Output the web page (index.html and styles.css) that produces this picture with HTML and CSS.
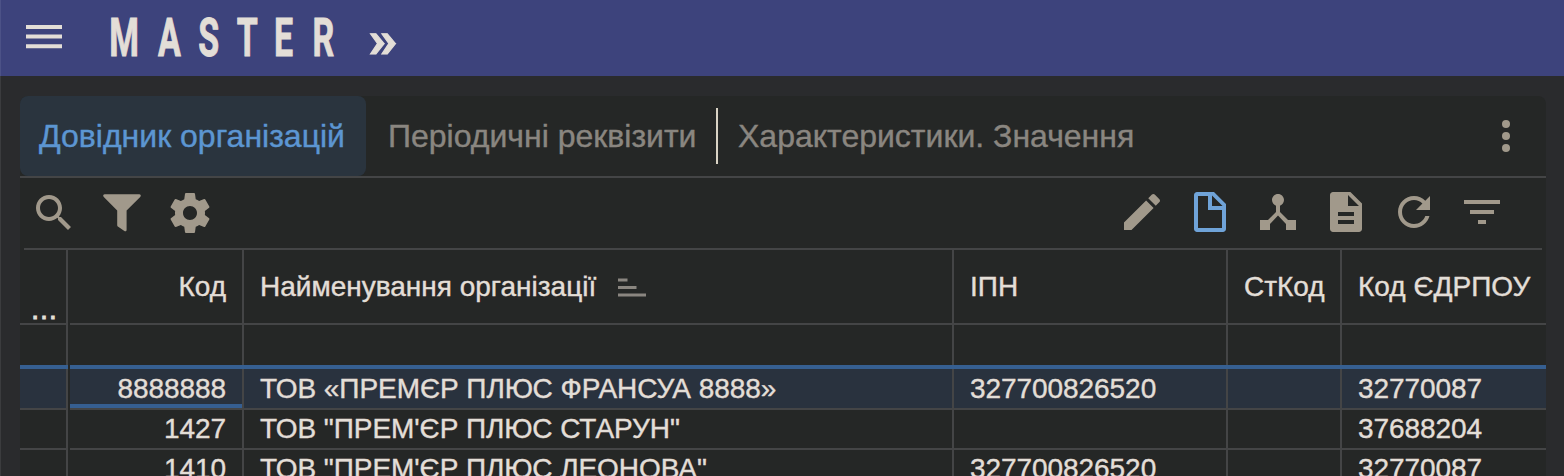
FILE: index.html
```html
<!DOCTYPE html>
<html lang="uk">
<head>
<meta charset="utf-8">
<title>MASTER</title>
<link rel="stylesheet" href="styles.css">
</head>
<body>
<header class="appbar">
  <svg class="menu" width="36" height="26" viewBox="0 0 36 26"><path d="M0 0h36v4H0zM0 9.500h36v4H0zM0 19.200h36v4H0z"/></svg>
  <svg class="brand" width="300" height="76" viewBox="0 0 300 76">
    <text class="brand-name" transform="scale(.64 1)" y="56" x="2 78 141 201 259.2 319.4">MASTER</text>
    <text class="brand-arrow" transform="scale(1.14 1)" x="228" y="57">»</text>
  </svg>
</header>
<main class="panel">
  <nav class="tabs">
    <a class="tab active">Довідник організацій</a>
    <a class="tab second">Періодичні реквізити</a>
    <span class="divider"></span>
    <a class="tab third">Характеристики. Значення</a>
    <svg class="icon more" viewBox="0 0 24 24"><circle cx="12" cy="6" r="2"/><circle cx="12" cy="12" r="2"/><circle cx="12" cy="18" r="2"/></svg>
  </nav>
  <div class="toolbar">
    <div class="tools left">
      <svg class="icon" viewBox="0 0 24 24"><path d="M15.5 14h-.79l-.28-.27C15.41 12.59 16 11.11 16 9.5 16 5.91 13.09 3 9.5 3S3 5.91 3 9.5 5.91 16 9.5 16c1.61 0 3.09-.59 4.23-1.57l.27.28v.79l5 4.99L20.49 19l-4.99-5zm-6 0C7.01 14 5 11.99 5 9.5S7.01 5 9.5 5 14 7.01 14 9.5 11.99 14 9.5 14z"/></svg>
      <svg class="icon" viewBox="0 0 24 24"><path d="M3.4 2.6h17.2c.8 0 1.1.8.5 1.4l-6.8 6.8v9.6c0 .7-.6 1-1.1.6l-3.1-2.1c-.3-.2-.5-.4-.5-.8v-7.3L2.9 4c-.6-.6-.3-1.4.5-1.4z"/></svg>
      <svg class="icon" viewBox="0 0 24 24"><path d="M19.43 12.98c.04-.32.07-.64.07-.98s-.03-.66-.07-.98l2.11-1.65c.19-.15.24-.42.12-.64l-2-3.46c-.12-.22-.39-.3-.61-.22l-2.49 1c-.52-.4-1.08-.73-1.69-.98l-.38-2.65C14.46 2.18 14.25 2 14 2h-4c-.25 0-.46.18-.49.42l-.38 2.65c-.61.25-1.17.59-1.69.98l-2.49-1c-.23-.09-.49 0-.61.22l-2 3.46c-.13.22-.07.49.12.64l2.11 1.65c-.04.32-.07.65-.07.98s.03.66.07.98l-2.11 1.65c-.19.15-.24.42-.12.64l2 3.46c.12.22.39.3.61.22l2.49-1c.52.4 1.08.73 1.69.98l.38 2.65c.03.24.24.42.49.42h4c.25 0 .46-.18.49-.42l.38-2.65c.61-.25 1.17-.59 1.69-.98l2.49 1c.23.09.49 0 .61-.22l2-3.46c.12-.22.07-.49-.12-.64l-2.11-1.65zM12 15.5c-1.93 0-3.5-1.57-3.5-3.5s1.57-3.5 3.5-3.5 3.5 1.57 3.5 3.5-1.57 3.5-3.5 3.5z"/></svg>
    </div>
    <div class="tools">
      <svg class="icon" viewBox="0 0 24 24"><path d="M3 17.25V21h3.75L17.81 9.94l-3.75-3.75L3 17.25zM20.71 7.04c.39-.39.39-1.02 0-1.41l-2.34-2.34c-.39-.39-1.02-.39-1.41 0l-1.83 1.83 3.75 3.75 1.83-1.83z"/></svg>
      <svg class="icon accent" viewBox="0 0 24 24"><path fill-rule="evenodd" d="M14 2H5.5C4.7 2 4 2.7 4 3.5v17c0 .8.7 1.5 1.5 1.5h13c.8 0 1.5-.7 1.5-1.5V8l-6-6zM6 4h5v7h7v9H6zM13 3.700 18.300 9H13z"/></svg>
      <svg class="icon" viewBox="0 0 24 24"><path d="M17 16l-4-4V8.820C14.160 8.400 15 7.300 15 6c0-1.660-1.340-3-3-3S9 4.340 9 6c0 1.300.84 2.400 2 2.820V12l-4 4H3v5h5v-3.050l4-4.200 4 4.200V21h5v-5h-4z"/></svg>
      <svg class="icon" viewBox="0 0 24 24"><path fill-rule="evenodd" d="M14.200 2H5.500C4.700 2 4 2.700 4 3.500v17c0 .8.7 1.500 1.500 1.500h13c.8 0 1.500-.7 1.500-1.500V7.800L14.200 2zM16 18H8v-2h8zM16 14H8v-2h8zM13 9V3.500L18.500 9z"/></svg>
      <svg class="icon" viewBox="0 0 24 24"><path d="M17.650 6.350C16.200 4.900 14.210 4 12 4c-4.420 0-7.990 3.580-7.990 8s3.570 8 7.990 8c3.730 0 6.840-2.550 7.730-6h-2.080c-.82 2.330-3.040 4-5.650 4-3.310 0-6-2.690-6-6s2.690-6 6-6c1.660 0 3.140.69 4.220 1.780L13 11h7V4l-2.350 2.350z"/></svg>
      <svg class="icon" viewBox="0 0 24 24"><path d="M10 18h4v-2h-4v2zM3 6v2h18V6H3zm3 7h12v-2H6v2z"/></svg>
    </div>
  </div>
  <section class="grid">
    <div class="row head">
      <div class="cell dots">…</div><div class="gap"></div>
      <div class="cell num">Код</div>
      <div class="cell">Найменування організації<svg class="sort" width="28" height="20" viewBox="0 0 28 20"><path d="M0 1.500h9.500v3H0zM0 9h18.500v3H0zM0 16.500h28v3H0z"/></svg></div>
      <div class="cell">ІПН</div><div class="cell">СтКод</div><div class="cell">Код ЄДРПОУ</div>
    </div>
    <div class="row filter"><div class="cell"></div><div class="gap"></div><div class="cell"></div><div class="cell"></div><div class="cell"></div><div class="cell"></div><div class="cell"></div></div>
    <div class="row rule"><div></div><div class="gap"></div><div></div></div>
    <div class="row selected"><div class="cell"></div><div class="gap"></div><div class="cell num focus">8888888</div><div class="cell">ТОВ «ПРЕМЄР ПЛЮС ФРАНСУА 8888»</div><div class="cell">327700826520</div><div class="cell"></div><div class="cell">32770087</div></div>
    <div class="row"><div class="cell"></div><div class="gap"></div><div class="cell num">1427</div><div class="cell">ТОВ "ПРЕМ'ЄР ПЛЮС СТАРУН"</div><div class="cell"></div><div class="cell"></div><div class="cell">37688204</div></div>
    <div class="row"><div class="cell"></div><div class="gap"></div><div class="cell num">1410</div><div class="cell">ТОВ "ПРЕМ'ЄР ПЛЮС ЛЕОНОВА"</div><div class="cell">327700826520</div><div class="cell"></div><div class="cell">32770087</div></div>
  </section>
</main>
</body>
</html>
```
FILE: styles.css
```css
* { box-sizing: border-box; }
body {
  margin: 0;
  height: 476px;
  overflow: hidden;
  background: #2a2b2d;
  color: #e3ded7;
  font-family: "Liberation Sans", Arial, sans-serif;
  font-size: 28px;
  -webkit-text-stroke: .4px currentColor;
  box-shadow: inset 1px 0 #3b3c3e;
}
.appbar {
  display: flex;
  align-items: center;
  height: 76px;
  padding-left: 26px;
  background: #3d437c;
  box-shadow: inset 1px 0 #4c5287;
}
.menu { fill: #e3ded7; }
.brand { margin-left: 46px; fill: #e3ded7; -webkit-text-stroke: 0; }
.brand-name { font: 700 53px Roboto, sans-serif; stroke: #e3ded7; stroke-width: .9px; }
.brand-arrow { font: 700 52px Roboto, sans-serif; stroke: #e3ded7; stroke-width: 1px; }
.panel {
  width: 1526px;
  margin: 20px 0 0 20px;
  background: #252726;
  border-radius: 8px 8px 0 0;
}
.tabs {
  display: flex;
  align-items: center;
  height: 82px;
  border-bottom: 2px solid #444546;
  font-size: 32px;
  color: #8a8680;
}
.tab { line-height: 80px; white-space: nowrap; }
.active {
  width: 346px;
  padding-left: 19px;
  border-radius: 8px;
  background: #2a343e;
  color: #5c96d2;
}
.second { width: 350px; padding-left: 22px; }
.divider { width: 2px; height: 56px; background: #d9d3c5; }
.third { padding-left: 20px; }
.icon { display: block; width: 48px; height: 48px; fill: #a1998b; }
.accent { fill: #6fa3d8; }
.more { margin: 0 16px 0 auto; }
.toolbar {
  display: flex;
  justify-content: space-between;
  height: 70px;
  padding: 10px 40px 0 10px;
}
.tools { display: flex; gap: 20px; }
.left { padding-top: 1px; }
.grid { height: 228px; overflow: hidden; }
.grid::before {
  content: "";
  display: block;
  height: 2px;
  margin: 0 4px;
  background: #444546;
}
.row {
  display: grid;
  grid-template-columns: 48px 2px 174px 710px 274px 114px 204px;
  height: 40px;
  letter-spacing: -.06px;
}
.cell {
  display: flex;
  align-items: center;
  padding-left: 16px;
  border-right: 2px solid #444546;
  border-bottom: 2px solid #444546;
  white-space: nowrap;
}
.cell:last-child { border-right: 0; }
.num { justify-content: flex-end; padding: 0 16px 0 0; }
.head { height: 75px; letter-spacing: 0; }
.dots { align-items: flex-end; padding: 0 0 2px 10px; line-height: 22px; -webkit-text-stroke-width: 1px; }
.sort { margin-left: 22px; fill: #8a8680; }
.filter .cell { border-bottom: 0; }
.rule { height: 4px; }
.rule > div { background: #365f91; }
.rule > .gap { background: none; }
.rule > div:last-child { grid-column: 3 / -1; }
.selected { height: 41px; }
.selected .cell { background: #29323e; }
.focus { box-shadow: inset 0 -4px #365f91; }
```
